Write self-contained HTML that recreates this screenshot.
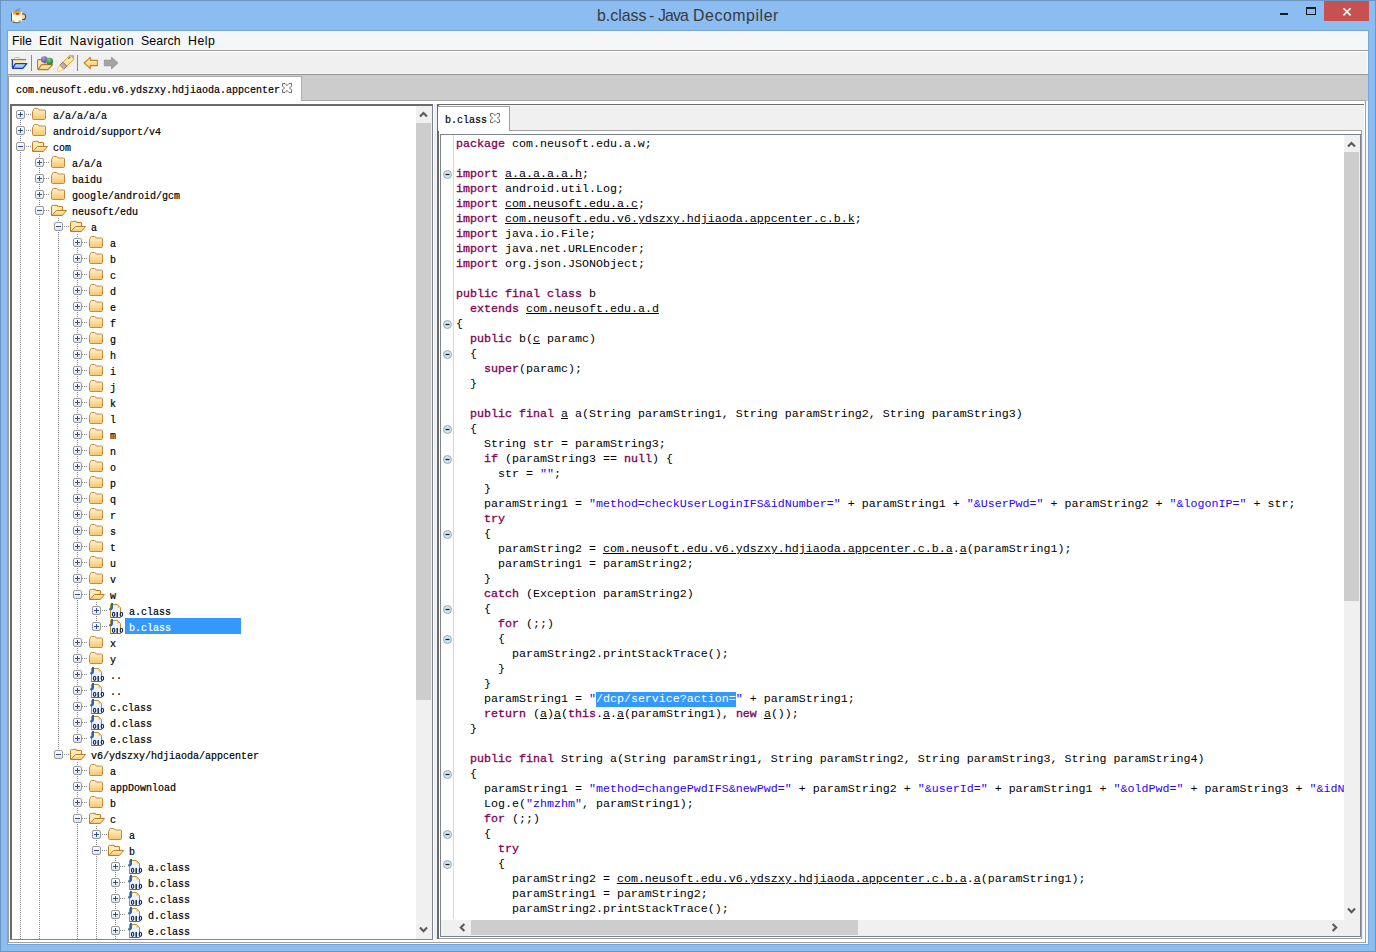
<!DOCTYPE html><html><head><meta charset="utf-8"><style>
*{margin:0;padding:0;box-sizing:border-box}
html,body{width:1376px;height:952px;overflow:hidden}
body{position:relative;background:#8bbdf2;font-family:"Liberation Sans",sans-serif}
.a{position:absolute}
.title{position:absolute;left:597px;top:6px;font-size:15.9px;color:#3a3a3a;white-space:nowrap;line-height:20px}
.menu{position:absolute;top:33px;font-size:12.3px;color:#000;line-height:16px;white-space:nowrap}
.tt{position:absolute;font-family:"Liberation Mono",monospace;font-size:10px;letter-spacing:0px;line-height:16px;white-space:pre;color:#000;-webkit-text-stroke:0.2px #000}
.tt.w{color:#fff;-webkit-text-stroke:0.2px #fff}
.code{position:absolute;left:456px;font-family:"Liberation Mono",monospace;font-size:11.667px;line-height:15px;white-space:pre;color:#000}
.k{color:#7f0055;-webkit-text-stroke:0.3px #7f0055}
.s{color:#2a00ff}
.u{text-decoration:underline}
.sel{color:#fff}
</style></head><body>
<div class="a" style="left:0;top:0;width:1376px;height:952px;border:1px solid #6b96c2"></div>
<div class="a" style="left:7px;top:30px;width:1362px;height:915px;border:1px solid #74a4d8"></div>
<svg class="a" style="left:8px;top:4px" width="22" height="22" viewBox="8 4 22 22">
<path d="M15.5 12 L17 10 L18.5 10.5 L19.8 8.3" fill="none" stroke="#8a8f96" stroke-width="1.6" stroke-linejoin="round"/>
<ellipse cx="16.5" cy="22.3" rx="4" ry="0.9" fill="#4a6080" opacity="0.7"/>
<path d="M21.5 14 H23.5 Q25.5 14 25.5 16 V17.5 Q25.5 19.5 23.5 19.5 H21.5" fill="#f7d9a0" stroke="#7a4010" stroke-width="1.1"/>
<rect x="11" y="12" width="11" height="10" fill="#fffce6"/>
<rect x="11" y="12.5" width="1" height="9" fill="#8a4a14"/>
<path d="M12.5 12 H21 L20 14.5 H13.5Z" fill="#f5a020"/>
<rect x="16" y="13" width="3" height="1.6" fill="#e02010"/>
<rect x="12" y="20.5" width="2.5" height="1.5" fill="#f0a030"/><rect x="18.5" y="20.5" width="3" height="1.5" fill="#f0a030"/>
</svg>
<div class="title" style="left:597px">b.class</div>
<div class="title" style="left:649px">-</div>
<div class="title" style="left:658px;letter-spacing:-0.9px">Java</div>
<div class="title" style="left:693px;letter-spacing:0.55px">Decompiler</div>
<div class="a" style="left:1280px;top:13px;width:8px;height:2px;background:#1a1a1a"></div>
<div class="a" style="left:1306px;top:7px;width:10px;height:8px;border:1px solid #1a1a1a;border-top-width:2px"></div>
<div class="a" style="left:1324px;top:1px;width:45px;height:20px;background:#c75050"></div>
<svg class="a" style="left:1342px;top:7px" width="10" height="10" viewBox="0 0 10 10"><path d="M1.4 1.2 L8.6 8.4 M8.6 1.2 L1.4 8.4" stroke="#fff" stroke-width="1.6"/></svg>
<div class="a" style="left:8px;top:31px;width:1360px;height:913px;background:#f0f0f0"></div>
<div class="a" style="left:1366px;top:52px;width:2px;height:892px;background:#faf8f5"></div>
<div class="a" style="left:8px;top:943px;width:1360px;height:1px;background:#faf8f5"></div>
<div class="a" style="left:8px;top:31px;width:1360px;height:19px;background:#f5f6f7"></div>
<div class="a" style="left:8px;top:50px;width:1360px;height:1px;background:#a0a0a0"></div>
<div class="a" style="left:8px;top:51px;width:1360px;height:1px;background:#fff"></div>
<div class="menu" style="left:12px;letter-spacing:0px">File</div>
<div class="menu" style="left:39px;letter-spacing:0.5px">Edit</div>
<div class="menu" style="left:70px;letter-spacing:0.6px">Navigation</div>
<div class="menu" style="left:141px;letter-spacing:0.15px">Search</div>
<div class="menu" style="left:188px;letter-spacing:0.5px">Help</div>
<div class="a" style="left:8px;top:73px;width:1360px;height:1px;background:#f6f6f6"></div>
<div class="a" style="left:8px;top:74px;width:1360px;height:1px;background:#969696"></div>
<div class="a" style="left:8px;top:75px;width:1360px;height:26px;background:#cccccc"></div>
<div class="a" style="left:8px;top:100px;width:1358px;height:1px;background:#a8a8a8"></div>
<div class="a" style="left:8px;top:76px;width:294px;height:25px;background:#fff;border-left:1px solid #a0a0a0;border-top:1px solid #adadad;border-right:1px solid #adadad"></div>
<div class="tt" style="left:16px;top:83px">com.neusoft.edu.v6.ydszxy.hdjiaoda.appcenter</div>
<svg class="a" style="left:282px;top:83px" width="11" height="11" viewBox="0 0 11 11"><path d="M0.5 0.5 H3 L5 2.5 L7 0.5 H9.5 V3 L7.5 5 L9.5 7 V9.5 H7 L5 7.5 L3 9.5 H0.5 V7 L2.5 5 L0.5 3 Z" fill="#fff" stroke="#6b6b6b" stroke-width="1"/></svg>
<div class="a" style="left:8px;top:101px;width:1358px;height:842px;background:#fff;border-left:1px solid #a0a0a0;border-right:1px solid #a0a0a0;border-bottom:1px solid #a0a0a0"></div>
<div class="a" style="left:434px;top:104px;width:3px;height:836px;background:#f0f0f0"></div>
<div class="a" style="left:10px;top:104px;width:423px;height:836px;border-top:2px solid #6a6a6a;border-left:2px solid #6a6a6a;border-right:1px solid #7a8494;border-bottom:1px solid #7a8494;background:#fff;overflow:hidden">
</div>
<div class="a" style="left:416px;top:106px;width:16px;height:833px;background:#f0f0f0"></div>
<div class="a" style="left:416px;top:123px;width:15px;height:577px;background:#cdcdcd"></div>
<svg class="a" style="left:419px;top:110px" width="9" height="9" viewBox="0 0 9 9"><path d="M1 6.6 L4.5 3 L8 6.6" fill="none" stroke="#5a5a5a" stroke-width="2.1"/></svg>
<svg class="a" style="left:419px;top:925px" width="9" height="9" viewBox="0 0 9 9"><path d="M1 2.6 L4.5 6.2 L8 2.6" fill="none" stroke="#5a5a5a" stroke-width="2.1"/></svg>
<svg width="0" height="0" style="position:absolute">
<defs>
<linearGradient id="fg" x1="0" y1="0" x2="0" y2="1"><stop offset="0" stop-color="#fff3d0"/><stop offset="1" stop-color="#f6c768"/></linearGradient>
<linearGradient id="bg" x1="0" y1="0" x2="0" y2="1"><stop offset="0" stop-color="#ffffff"/><stop offset="1" stop-color="#e4e4e4"/></linearGradient>
<symbol id="fold" viewBox="0 0 15 12"><path d="M1.5 2.5 V1.5 Q1.5 0.5 2.5 0.5 H5.5 Q6.5 0.5 7 2 H12.5 Q13.5 2 13.5 3 V10.5 Q13.5 11.5 12.5 11.5 H1.5 Q0.5 11.5 0.5 10.5 V3.5 Q0.5 2.5 1.5 2.5Z" fill="url(#fg)" stroke="#c8893a"/></symbol>
<symbol id="open" viewBox="0 0 16 12"><path d="M0.5 11.5 V2.5 Q0.5 1.5 1.5 1.5 H2.5 V1.6 Q2.5 1.3 3 1.3 H6 Q6.5 1.3 6.5 1.8 V2.5 H11 Q11.5 2.5 11.5 3 V6.5" fill="#fdebb8" stroke="#c07a20"/><path d="M5.5 6.5 H15.5 L11.3 11.5 H0.8 Z" fill="url(#fg)" stroke="#c07a20" stroke-linejoin="round"/></symbol>
<symbol id="cls" viewBox="0 0 15 15"><path d="M1.5 14.5 V1.5 H8.5 L11.5 4.5 V14.5 Z" fill="#eef3fb" stroke="#b8902a"/><path d="M8.5 1.5 V4.5 H11.5Z" fill="#e0b860"/><path d="M1.5 14.5 H11.5" stroke="#7a6a30"/><path d="M3 0 V4.8 Q3 6.6 0.2 6.3" fill="none" stroke="#2a66a8" stroke-width="2"/><ellipse cx="4.6" cy="11.3" rx="1.2" ry="2.1" fill="none" stroke="#0a2060" stroke-width="1.15"/><path d="M8.2 9 V14" stroke="#0a2060" stroke-width="1.4"/><ellipse cx="12.4" cy="11.3" rx="1.2" ry="2.1" fill="none" stroke="#0a2060" stroke-width="1.15"/></symbol>
<symbol id="plus" viewBox="0 0 9 9"><rect x="0.5" y="0.5" width="8" height="8" rx="1.5" fill="url(#bg)" stroke="#999"/><path d="M2 4.5 H7 M4.5 2 V7" stroke="#2d4f9a" stroke-width="1"/></symbol>
<symbol id="minus" viewBox="0 0 9 9"><rect x="0.5" y="0.5" width="8" height="8" rx="1.5" fill="url(#bg)" stroke="#999"/><path d="M2 4.5 H7" stroke="#2d4f9a" stroke-width="1"/></symbol>
<symbol id="gfold" viewBox="0 0 9 9"><circle cx="4.5" cy="4.5" r="4" fill="#cfe6f5" stroke="#9aa9b5"/><path d="M2.5 4.5 H6.5" stroke="#1a1a1a" stroke-width="1.2"/></symbol>
</defs></svg>
<div class="a" style="left:12px;top:106px;width:404px;height:833px;overflow:hidden">
<div class="a" style="left:-12px;top:-106px;width:1376px;height:952px">
<div class="a" style="left:20px;top:114px;width:1px;height:825px;background:repeating-linear-gradient(to bottom,#8a8a8a 0 1px,transparent 1px 2px)"></div><div class="a" style="left:39px;top:154px;width:1px;height:785px;background:repeating-linear-gradient(to bottom,#8a8a8a 0 1px,transparent 1px 2px)"></div><div class="a" style="left:58px;top:218px;width:1px;height:536px;background:repeating-linear-gradient(to bottom,#8a8a8a 0 1px,transparent 1px 2px)"></div><div class="a" style="left:77px;top:234px;width:1px;height:504px;background:repeating-linear-gradient(to bottom,#8a8a8a 0 1px,transparent 1px 2px)"></div><div class="a" style="left:96px;top:602px;width:1px;height:24px;background:repeating-linear-gradient(to bottom,#8a8a8a 0 1px,transparent 1px 2px)"></div><div class="a" style="left:77px;top:762px;width:1px;height:177px;background:repeating-linear-gradient(to bottom,#8a8a8a 0 1px,transparent 1px 2px)"></div><div class="a" style="left:96px;top:826px;width:1px;height:113px;background:repeating-linear-gradient(to bottom,#8a8a8a 0 1px,transparent 1px 2px)"></div><div class="a" style="left:115px;top:858px;width:1px;height:81px;background:repeating-linear-gradient(to bottom,#8a8a8a 0 1px,transparent 1px 2px)"></div><div class="a" style="left:26px;top:114px;width:5px;height:1px;background:repeating-linear-gradient(to right,#8a8a8a 0 1px,transparent 1px 2px)"></div><svg class="a" style="left:16px;top:110px" width="9" height="9"><use href="#plus"/></svg><svg class="a" style="left:32px;top:108px" width="15" height="12"><use href="#fold"/></svg><div class="tt" style="left:53px;top:109px">a/a/a/a/a</div><div class="a" style="left:26px;top:130px;width:5px;height:1px;background:repeating-linear-gradient(to right,#8a8a8a 0 1px,transparent 1px 2px)"></div><svg class="a" style="left:16px;top:126px" width="9" height="9"><use href="#plus"/></svg><svg class="a" style="left:32px;top:124px" width="15" height="12"><use href="#fold"/></svg><div class="tt" style="left:53px;top:125px">android/support/v4</div><div class="a" style="left:26px;top:146px;width:5px;height:1px;background:repeating-linear-gradient(to right,#8a8a8a 0 1px,transparent 1px 2px)"></div><svg class="a" style="left:16px;top:142px" width="9" height="9"><use href="#minus"/></svg><svg class="a" style="left:32px;top:140px" width="16" height="12"><use href="#open"/></svg><div class="tt" style="left:53px;top:141px">com</div><div class="a" style="left:44px;top:162px;width:6px;height:1px;background:repeating-linear-gradient(to right,#8a8a8a 0 1px,transparent 1px 2px)"></div><svg class="a" style="left:35px;top:158px" width="9" height="9"><use href="#plus"/></svg><svg class="a" style="left:51px;top:156px" width="15" height="12"><use href="#fold"/></svg><div class="tt" style="left:72px;top:157px">a/a/a</div><div class="a" style="left:44px;top:178px;width:6px;height:1px;background:repeating-linear-gradient(to right,#8a8a8a 0 1px,transparent 1px 2px)"></div><svg class="a" style="left:35px;top:174px" width="9" height="9"><use href="#plus"/></svg><svg class="a" style="left:51px;top:172px" width="15" height="12"><use href="#fold"/></svg><div class="tt" style="left:72px;top:173px">baidu</div><div class="a" style="left:44px;top:194px;width:6px;height:1px;background:repeating-linear-gradient(to right,#8a8a8a 0 1px,transparent 1px 2px)"></div><svg class="a" style="left:35px;top:190px" width="9" height="9"><use href="#plus"/></svg><svg class="a" style="left:51px;top:188px" width="15" height="12"><use href="#fold"/></svg><div class="tt" style="left:72px;top:189px">google/android/gcm</div><div class="a" style="left:44px;top:210px;width:6px;height:1px;background:repeating-linear-gradient(to right,#8a8a8a 0 1px,transparent 1px 2px)"></div><svg class="a" style="left:35px;top:206px" width="9" height="9"><use href="#minus"/></svg><svg class="a" style="left:51px;top:204px" width="16" height="12"><use href="#open"/></svg><div class="tt" style="left:72px;top:205px">neusoft/edu</div><div class="a" style="left:64px;top:226px;width:5px;height:1px;background:repeating-linear-gradient(to right,#8a8a8a 0 1px,transparent 1px 2px)"></div><svg class="a" style="left:54px;top:222px" width="9" height="9"><use href="#minus"/></svg><svg class="a" style="left:70px;top:220px" width="16" height="12"><use href="#open"/></svg><div class="tt" style="left:91px;top:221px">a</div><div class="a" style="left:82px;top:242px;width:6px;height:1px;background:repeating-linear-gradient(to right,#8a8a8a 0 1px,transparent 1px 2px)"></div><svg class="a" style="left:73px;top:238px" width="9" height="9"><use href="#plus"/></svg><svg class="a" style="left:89px;top:236px" width="15" height="12"><use href="#fold"/></svg><div class="tt" style="left:110px;top:237px">a</div><div class="a" style="left:82px;top:258px;width:6px;height:1px;background:repeating-linear-gradient(to right,#8a8a8a 0 1px,transparent 1px 2px)"></div><svg class="a" style="left:73px;top:254px" width="9" height="9"><use href="#plus"/></svg><svg class="a" style="left:89px;top:252px" width="15" height="12"><use href="#fold"/></svg><div class="tt" style="left:110px;top:253px">b</div><div class="a" style="left:82px;top:274px;width:6px;height:1px;background:repeating-linear-gradient(to right,#8a8a8a 0 1px,transparent 1px 2px)"></div><svg class="a" style="left:73px;top:270px" width="9" height="9"><use href="#plus"/></svg><svg class="a" style="left:89px;top:268px" width="15" height="12"><use href="#fold"/></svg><div class="tt" style="left:110px;top:269px">c</div><div class="a" style="left:82px;top:290px;width:6px;height:1px;background:repeating-linear-gradient(to right,#8a8a8a 0 1px,transparent 1px 2px)"></div><svg class="a" style="left:73px;top:286px" width="9" height="9"><use href="#plus"/></svg><svg class="a" style="left:89px;top:284px" width="15" height="12"><use href="#fold"/></svg><div class="tt" style="left:110px;top:285px">d</div><div class="a" style="left:82px;top:306px;width:6px;height:1px;background:repeating-linear-gradient(to right,#8a8a8a 0 1px,transparent 1px 2px)"></div><svg class="a" style="left:73px;top:302px" width="9" height="9"><use href="#plus"/></svg><svg class="a" style="left:89px;top:300px" width="15" height="12"><use href="#fold"/></svg><div class="tt" style="left:110px;top:301px">e</div><div class="a" style="left:82px;top:322px;width:6px;height:1px;background:repeating-linear-gradient(to right,#8a8a8a 0 1px,transparent 1px 2px)"></div><svg class="a" style="left:73px;top:318px" width="9" height="9"><use href="#plus"/></svg><svg class="a" style="left:89px;top:316px" width="15" height="12"><use href="#fold"/></svg><div class="tt" style="left:110px;top:317px">f</div><div class="a" style="left:82px;top:338px;width:6px;height:1px;background:repeating-linear-gradient(to right,#8a8a8a 0 1px,transparent 1px 2px)"></div><svg class="a" style="left:73px;top:334px" width="9" height="9"><use href="#plus"/></svg><svg class="a" style="left:89px;top:332px" width="15" height="12"><use href="#fold"/></svg><div class="tt" style="left:110px;top:333px">g</div><div class="a" style="left:82px;top:354px;width:6px;height:1px;background:repeating-linear-gradient(to right,#8a8a8a 0 1px,transparent 1px 2px)"></div><svg class="a" style="left:73px;top:350px" width="9" height="9"><use href="#plus"/></svg><svg class="a" style="left:89px;top:348px" width="15" height="12"><use href="#fold"/></svg><div class="tt" style="left:110px;top:349px">h</div><div class="a" style="left:82px;top:370px;width:6px;height:1px;background:repeating-linear-gradient(to right,#8a8a8a 0 1px,transparent 1px 2px)"></div><svg class="a" style="left:73px;top:366px" width="9" height="9"><use href="#plus"/></svg><svg class="a" style="left:89px;top:364px" width="15" height="12"><use href="#fold"/></svg><div class="tt" style="left:110px;top:365px">i</div><div class="a" style="left:82px;top:386px;width:6px;height:1px;background:repeating-linear-gradient(to right,#8a8a8a 0 1px,transparent 1px 2px)"></div><svg class="a" style="left:73px;top:382px" width="9" height="9"><use href="#plus"/></svg><svg class="a" style="left:89px;top:380px" width="15" height="12"><use href="#fold"/></svg><div class="tt" style="left:110px;top:381px">j</div><div class="a" style="left:82px;top:402px;width:6px;height:1px;background:repeating-linear-gradient(to right,#8a8a8a 0 1px,transparent 1px 2px)"></div><svg class="a" style="left:73px;top:398px" width="9" height="9"><use href="#plus"/></svg><svg class="a" style="left:89px;top:396px" width="15" height="12"><use href="#fold"/></svg><div class="tt" style="left:110px;top:397px">k</div><div class="a" style="left:82px;top:418px;width:6px;height:1px;background:repeating-linear-gradient(to right,#8a8a8a 0 1px,transparent 1px 2px)"></div><svg class="a" style="left:73px;top:414px" width="9" height="9"><use href="#plus"/></svg><svg class="a" style="left:89px;top:412px" width="15" height="12"><use href="#fold"/></svg><div class="tt" style="left:110px;top:413px">l</div><div class="a" style="left:82px;top:434px;width:6px;height:1px;background:repeating-linear-gradient(to right,#8a8a8a 0 1px,transparent 1px 2px)"></div><svg class="a" style="left:73px;top:430px" width="9" height="9"><use href="#plus"/></svg><svg class="a" style="left:89px;top:428px" width="15" height="12"><use href="#fold"/></svg><div class="tt" style="left:110px;top:429px">m</div><div class="a" style="left:82px;top:450px;width:6px;height:1px;background:repeating-linear-gradient(to right,#8a8a8a 0 1px,transparent 1px 2px)"></div><svg class="a" style="left:73px;top:446px" width="9" height="9"><use href="#plus"/></svg><svg class="a" style="left:89px;top:444px" width="15" height="12"><use href="#fold"/></svg><div class="tt" style="left:110px;top:445px">n</div><div class="a" style="left:82px;top:466px;width:6px;height:1px;background:repeating-linear-gradient(to right,#8a8a8a 0 1px,transparent 1px 2px)"></div><svg class="a" style="left:73px;top:462px" width="9" height="9"><use href="#plus"/></svg><svg class="a" style="left:89px;top:460px" width="15" height="12"><use href="#fold"/></svg><div class="tt" style="left:110px;top:461px">o</div><div class="a" style="left:82px;top:482px;width:6px;height:1px;background:repeating-linear-gradient(to right,#8a8a8a 0 1px,transparent 1px 2px)"></div><svg class="a" style="left:73px;top:478px" width="9" height="9"><use href="#plus"/></svg><svg class="a" style="left:89px;top:476px" width="15" height="12"><use href="#fold"/></svg><div class="tt" style="left:110px;top:477px">p</div><div class="a" style="left:82px;top:498px;width:6px;height:1px;background:repeating-linear-gradient(to right,#8a8a8a 0 1px,transparent 1px 2px)"></div><svg class="a" style="left:73px;top:494px" width="9" height="9"><use href="#plus"/></svg><svg class="a" style="left:89px;top:492px" width="15" height="12"><use href="#fold"/></svg><div class="tt" style="left:110px;top:493px">q</div><div class="a" style="left:82px;top:514px;width:6px;height:1px;background:repeating-linear-gradient(to right,#8a8a8a 0 1px,transparent 1px 2px)"></div><svg class="a" style="left:73px;top:510px" width="9" height="9"><use href="#plus"/></svg><svg class="a" style="left:89px;top:508px" width="15" height="12"><use href="#fold"/></svg><div class="tt" style="left:110px;top:509px">r</div><div class="a" style="left:82px;top:530px;width:6px;height:1px;background:repeating-linear-gradient(to right,#8a8a8a 0 1px,transparent 1px 2px)"></div><svg class="a" style="left:73px;top:526px" width="9" height="9"><use href="#plus"/></svg><svg class="a" style="left:89px;top:524px" width="15" height="12"><use href="#fold"/></svg><div class="tt" style="left:110px;top:525px">s</div><div class="a" style="left:82px;top:546px;width:6px;height:1px;background:repeating-linear-gradient(to right,#8a8a8a 0 1px,transparent 1px 2px)"></div><svg class="a" style="left:73px;top:542px" width="9" height="9"><use href="#plus"/></svg><svg class="a" style="left:89px;top:540px" width="15" height="12"><use href="#fold"/></svg><div class="tt" style="left:110px;top:541px">t</div><div class="a" style="left:82px;top:562px;width:6px;height:1px;background:repeating-linear-gradient(to right,#8a8a8a 0 1px,transparent 1px 2px)"></div><svg class="a" style="left:73px;top:558px" width="9" height="9"><use href="#plus"/></svg><svg class="a" style="left:89px;top:556px" width="15" height="12"><use href="#fold"/></svg><div class="tt" style="left:110px;top:557px">u</div><div class="a" style="left:82px;top:578px;width:6px;height:1px;background:repeating-linear-gradient(to right,#8a8a8a 0 1px,transparent 1px 2px)"></div><svg class="a" style="left:73px;top:574px" width="9" height="9"><use href="#plus"/></svg><svg class="a" style="left:89px;top:572px" width="15" height="12"><use href="#fold"/></svg><div class="tt" style="left:110px;top:573px">v</div><div class="a" style="left:82px;top:594px;width:6px;height:1px;background:repeating-linear-gradient(to right,#8a8a8a 0 1px,transparent 1px 2px)"></div><svg class="a" style="left:73px;top:590px" width="9" height="9"><use href="#minus"/></svg><svg class="a" style="left:89px;top:588px" width="16" height="12"><use href="#open"/></svg><div class="tt" style="left:110px;top:589px">w</div><div class="a" style="left:102px;top:610px;width:5px;height:1px;background:repeating-linear-gradient(to right,#8a8a8a 0 1px,transparent 1px 2px)"></div><svg class="a" style="left:92px;top:606px" width="9" height="9"><use href="#plus"/></svg><svg class="a" style="left:109px;top:603px" width="15" height="15"><use href="#cls"/></svg><div class="tt" style="left:129px;top:605px">a.class</div><div class="a" style="left:102px;top:626px;width:5px;height:1px;background:repeating-linear-gradient(to right,#8a8a8a 0 1px,transparent 1px 2px)"></div><svg class="a" style="left:92px;top:622px" width="9" height="9"><use href="#plus"/></svg><svg class="a" style="left:109px;top:619px" width="15" height="15"><use href="#cls"/></svg><div class="a" style="left:125px;top:618px;width:116px;height:16px;background:#3399ff"></div><div class="tt w" style="left:129px;top:621px">b.class</div><div class="a" style="left:82px;top:642px;width:6px;height:1px;background:repeating-linear-gradient(to right,#8a8a8a 0 1px,transparent 1px 2px)"></div><svg class="a" style="left:73px;top:638px" width="9" height="9"><use href="#plus"/></svg><svg class="a" style="left:89px;top:636px" width="15" height="12"><use href="#fold"/></svg><div class="tt" style="left:110px;top:637px">x</div><div class="a" style="left:82px;top:658px;width:6px;height:1px;background:repeating-linear-gradient(to right,#8a8a8a 0 1px,transparent 1px 2px)"></div><svg class="a" style="left:73px;top:654px" width="9" height="9"><use href="#plus"/></svg><svg class="a" style="left:89px;top:652px" width="15" height="12"><use href="#fold"/></svg><div class="tt" style="left:110px;top:653px">y</div><div class="a" style="left:82px;top:674px;width:6px;height:1px;background:repeating-linear-gradient(to right,#8a8a8a 0 1px,transparent 1px 2px)"></div><svg class="a" style="left:73px;top:670px" width="9" height="9"><use href="#plus"/></svg><svg class="a" style="left:90px;top:667px" width="15" height="15"><use href="#cls"/></svg><div class="tt" style="left:110px;top:669px">..</div><div class="a" style="left:82px;top:690px;width:6px;height:1px;background:repeating-linear-gradient(to right,#8a8a8a 0 1px,transparent 1px 2px)"></div><svg class="a" style="left:73px;top:686px" width="9" height="9"><use href="#plus"/></svg><svg class="a" style="left:90px;top:683px" width="15" height="15"><use href="#cls"/></svg><div class="tt" style="left:110px;top:685px">..</div><div class="a" style="left:82px;top:706px;width:6px;height:1px;background:repeating-linear-gradient(to right,#8a8a8a 0 1px,transparent 1px 2px)"></div><svg class="a" style="left:73px;top:702px" width="9" height="9"><use href="#plus"/></svg><svg class="a" style="left:90px;top:699px" width="15" height="15"><use href="#cls"/></svg><div class="tt" style="left:110px;top:701px">c.class</div><div class="a" style="left:82px;top:722px;width:6px;height:1px;background:repeating-linear-gradient(to right,#8a8a8a 0 1px,transparent 1px 2px)"></div><svg class="a" style="left:73px;top:718px" width="9" height="9"><use href="#plus"/></svg><svg class="a" style="left:90px;top:715px" width="15" height="15"><use href="#cls"/></svg><div class="tt" style="left:110px;top:717px">d.class</div><div class="a" style="left:82px;top:738px;width:6px;height:1px;background:repeating-linear-gradient(to right,#8a8a8a 0 1px,transparent 1px 2px)"></div><svg class="a" style="left:73px;top:734px" width="9" height="9"><use href="#plus"/></svg><svg class="a" style="left:90px;top:731px" width="15" height="15"><use href="#cls"/></svg><div class="tt" style="left:110px;top:733px">e.class</div><div class="a" style="left:64px;top:754px;width:5px;height:1px;background:repeating-linear-gradient(to right,#8a8a8a 0 1px,transparent 1px 2px)"></div><svg class="a" style="left:54px;top:750px" width="9" height="9"><use href="#minus"/></svg><svg class="a" style="left:70px;top:748px" width="16" height="12"><use href="#open"/></svg><div class="tt" style="left:91px;top:749px">v6/ydszxy/hdjiaoda/appcenter</div><div class="a" style="left:82px;top:770px;width:6px;height:1px;background:repeating-linear-gradient(to right,#8a8a8a 0 1px,transparent 1px 2px)"></div><svg class="a" style="left:73px;top:766px" width="9" height="9"><use href="#plus"/></svg><svg class="a" style="left:89px;top:764px" width="15" height="12"><use href="#fold"/></svg><div class="tt" style="left:110px;top:765px">a</div><div class="a" style="left:82px;top:786px;width:6px;height:1px;background:repeating-linear-gradient(to right,#8a8a8a 0 1px,transparent 1px 2px)"></div><svg class="a" style="left:73px;top:782px" width="9" height="9"><use href="#plus"/></svg><svg class="a" style="left:89px;top:780px" width="15" height="12"><use href="#fold"/></svg><div class="tt" style="left:110px;top:781px">appDownload</div><div class="a" style="left:82px;top:802px;width:6px;height:1px;background:repeating-linear-gradient(to right,#8a8a8a 0 1px,transparent 1px 2px)"></div><svg class="a" style="left:73px;top:798px" width="9" height="9"><use href="#plus"/></svg><svg class="a" style="left:89px;top:796px" width="15" height="12"><use href="#fold"/></svg><div class="tt" style="left:110px;top:797px">b</div><div class="a" style="left:82px;top:818px;width:6px;height:1px;background:repeating-linear-gradient(to right,#8a8a8a 0 1px,transparent 1px 2px)"></div><svg class="a" style="left:73px;top:814px" width="9" height="9"><use href="#minus"/></svg><svg class="a" style="left:89px;top:812px" width="16" height="12"><use href="#open"/></svg><div class="tt" style="left:110px;top:813px">c</div><div class="a" style="left:102px;top:834px;width:5px;height:1px;background:repeating-linear-gradient(to right,#8a8a8a 0 1px,transparent 1px 2px)"></div><svg class="a" style="left:92px;top:830px" width="9" height="9"><use href="#plus"/></svg><svg class="a" style="left:108px;top:828px" width="15" height="12"><use href="#fold"/></svg><div class="tt" style="left:129px;top:829px">a</div><div class="a" style="left:102px;top:850px;width:5px;height:1px;background:repeating-linear-gradient(to right,#8a8a8a 0 1px,transparent 1px 2px)"></div><svg class="a" style="left:92px;top:846px" width="9" height="9"><use href="#minus"/></svg><svg class="a" style="left:108px;top:844px" width="16" height="12"><use href="#open"/></svg><div class="tt" style="left:129px;top:845px">b</div><div class="a" style="left:120px;top:866px;width:6px;height:1px;background:repeating-linear-gradient(to right,#8a8a8a 0 1px,transparent 1px 2px)"></div><svg class="a" style="left:111px;top:862px" width="9" height="9"><use href="#plus"/></svg><svg class="a" style="left:128px;top:859px" width="15" height="15"><use href="#cls"/></svg><div class="tt" style="left:148px;top:861px">a.class</div><div class="a" style="left:120px;top:882px;width:6px;height:1px;background:repeating-linear-gradient(to right,#8a8a8a 0 1px,transparent 1px 2px)"></div><svg class="a" style="left:111px;top:878px" width="9" height="9"><use href="#plus"/></svg><svg class="a" style="left:128px;top:875px" width="15" height="15"><use href="#cls"/></svg><div class="tt" style="left:148px;top:877px">b.class</div><div class="a" style="left:120px;top:898px;width:6px;height:1px;background:repeating-linear-gradient(to right,#8a8a8a 0 1px,transparent 1px 2px)"></div><svg class="a" style="left:111px;top:894px" width="9" height="9"><use href="#plus"/></svg><svg class="a" style="left:128px;top:891px" width="15" height="15"><use href="#cls"/></svg><div class="tt" style="left:148px;top:893px">c.class</div><div class="a" style="left:120px;top:914px;width:6px;height:1px;background:repeating-linear-gradient(to right,#8a8a8a 0 1px,transparent 1px 2px)"></div><svg class="a" style="left:111px;top:910px" width="9" height="9"><use href="#plus"/></svg><svg class="a" style="left:128px;top:907px" width="15" height="15"><use href="#cls"/></svg><div class="tt" style="left:148px;top:909px">d.class</div><div class="a" style="left:120px;top:930px;width:6px;height:1px;background:repeating-linear-gradient(to right,#8a8a8a 0 1px,transparent 1px 2px)"></div><svg class="a" style="left:111px;top:926px" width="9" height="9"><use href="#plus"/></svg><svg class="a" style="left:128px;top:923px" width="15" height="15"><use href="#cls"/></svg><div class="tt" style="left:148px;top:925px">e.class</div>
</div></div>
<div class="a" style="left:437px;top:104px;width:927px;height:835px;border-top:1px solid #6a6a6a;border-left:2px solid #6a6a6a;background:#f0f0f0"></div>
<div class="a" style="left:439px;top:105px;width:925px;height:1px;background:#f8f8f8"></div>
<div class="a" style="left:438px;top:106px;width:72px;height:25px;background:#fff;border-top:1px solid #a0a0a0;border-right:1px solid #a0a0a0"></div>
<div class="tt" style="left:445px;top:113px">b.class</div>
<svg class="a" style="left:490px;top:113px" width="11" height="11" viewBox="0 0 11 11"><path d="M0.5 0.5 H3 L5 2.5 L7 0.5 H9.5 V3 L7.5 5 L9.5 7 V9.5 H7 L5 7.5 L3 9.5 H0.5 V7 L2.5 5 L0.5 3 Z" fill="#fff" stroke="#6b6b6b" stroke-width="1"/></svg>
<div class="a" style="left:510px;top:130px;width:852px;height:1px;background:#a0a0a0"></div>
<div class="a" style="left:439px;top:131px;width:923px;height:808px;background:#fff;border-right:1px solid #a0a0a0;border-bottom:1px solid #a0a0a0"></div>
<div class="a" style="left:440px;top:134px;width:921px;height:803px;border:1px solid #7a8391;background:#fff"></div>
<div class="a" style="left:453px;top:135px;width:1px;height:784px;background:#d8d8d8"></div>
<div class="a" style="left:454px;top:135px;width:890px;height:784px;overflow:hidden">
<div class="a" style="left:-454px;top:-135px;width:1376px;height:952px">
<div class="a" style="left:596px;top:692px;width:140px;height:15px;background:#3399ff"></div>
<div class="code" style="top:137px"><span class="k">package</span> com.neusoft.edu.a.w;</div>
<div class="code" style="top:152px"></div>
<div class="code" style="top:167px"><span class="k">import</span> <span class="u">a.a.a.a.a.h</span>;</div>
<div class="code" style="top:182px"><span class="k">import</span> android.util.Log;</div>
<div class="code" style="top:197px"><span class="k">import</span> <span class="u">com.neusoft.edu.a.c</span>;</div>
<div class="code" style="top:212px"><span class="k">import</span> <span class="u">com.neusoft.edu.v6.ydszxy.hdjiaoda.appcenter.c.b.k</span>;</div>
<div class="code" style="top:227px"><span class="k">import</span> java.io.File;</div>
<div class="code" style="top:242px"><span class="k">import</span> java.net.URLEncoder;</div>
<div class="code" style="top:257px"><span class="k">import</span> org.json.JSONObject;</div>
<div class="code" style="top:272px"></div>
<div class="code" style="top:287px"><span class="k">public</span> <span class="k">final</span> <span class="k">class</span> b</div>
<div class="code" style="top:302px">  <span class="k">extends</span> <span class="u">com.neusoft.edu.a.d</span></div>
<div class="code" style="top:317px">{</div>
<div class="code" style="top:332px">  <span class="k">public</span> b(<span class="u">c</span> paramc)</div>
<div class="code" style="top:347px">  {</div>
<div class="code" style="top:362px">    <span class="k">super</span>(paramc);</div>
<div class="code" style="top:377px">  }</div>
<div class="code" style="top:392px"></div>
<div class="code" style="top:407px">  <span class="k">public</span> <span class="k">final</span> <span class="u">a</span> a(String paramString1, String paramString2, String paramString3)</div>
<div class="code" style="top:422px">  {</div>
<div class="code" style="top:437px">    String str = paramString3;</div>
<div class="code" style="top:452px">    <span class="k">if</span> (paramString3 == <span class="k">null</span>) {</div>
<div class="code" style="top:467px">      str = <span class="s">&quot;&quot;</span>;</div>
<div class="code" style="top:482px">    }</div>
<div class="code" style="top:497px">    paramString1 = <span class="s">&quot;method=checkUserLoginIFS&amp;idNumber=&quot;</span> + paramString1 + <span class="s">&quot;&amp;UserPwd=&quot;</span> + paramString2 + <span class="s">&quot;&amp;logonIP=&quot;</span> + str;</div>
<div class="code" style="top:512px">    <span class="k">try</span></div>
<div class="code" style="top:527px">    {</div>
<div class="code" style="top:542px">      paramString2 = <span class="u">com.neusoft.edu.v6.ydszxy.hdjiaoda.appcenter.c.b.a</span>.<span class="u">a</span>(paramString1);</div>
<div class="code" style="top:557px">      paramString1 = paramString2;</div>
<div class="code" style="top:572px">    }</div>
<div class="code" style="top:587px">    <span class="k">catch</span> (Exception paramString2)</div>
<div class="code" style="top:602px">    {</div>
<div class="code" style="top:617px">      <span class="k">for</span> (;;)</div>
<div class="code" style="top:632px">      {</div>
<div class="code" style="top:647px">        paramString2.printStackTrace();</div>
<div class="code" style="top:662px">      }</div>
<div class="code" style="top:677px">    }</div>
<div class="code" style="top:692px">    paramString1 = <span class="s">&quot;</span><span class="sel">/dcp/service?action=</span><span class="s">&quot;</span> + paramString1;</div>
<div class="code" style="top:707px">    <span class="k">return</span> (<span class="u">a</span>)<span class="u">a</span>(<span class="k">this</span>.<span class="u">a</span>.<span class="u">a</span>(paramString1), <span class="k">new</span> <span class="u">a</span>());</div>
<div class="code" style="top:722px">  }</div>
<div class="code" style="top:737px"></div>
<div class="code" style="top:752px">  <span class="k">public</span> <span class="k">final</span> String a(String paramString1, String paramString2, String paramString3, String paramString4)</div>
<div class="code" style="top:767px">  {</div>
<div class="code" style="top:782px">    paramString1 = <span class="s">&quot;method=changePwdIFS&amp;newPwd=&quot;</span> + paramString2 + <span class="s">&quot;&amp;userId=&quot;</span> + paramString1 + <span class="s">&quot;&amp;oldPwd=&quot;</span> + paramString3 + <span class="s">&quot;&amp;idNumber=&quot;</span> + paramString4;</div>
<div class="code" style="top:797px">    Log.e(<span class="s">&quot;zhmzhm&quot;</span>, paramString1);</div>
<div class="code" style="top:812px">    <span class="k">for</span> (;;)</div>
<div class="code" style="top:827px">    {</div>
<div class="code" style="top:842px">      <span class="k">try</span></div>
<div class="code" style="top:857px">      {</div>
<div class="code" style="top:872px">        paramString2 = <span class="u">com.neusoft.edu.v6.ydszxy.hdjiaoda.appcenter.c.b.a</span>.<span class="u">a</span>(paramString1);</div>
<div class="code" style="top:887px">        paramString1 = paramString2;</div>
<div class="code" style="top:902px">        paramString2.printStackTrace();</div>
<div class="code" style="top:917px">      }</div>
</div></div>
<svg class="a" style="left:443px;top:605px" width="9" height="9"><use href="#gfold"/></svg>
<svg class="a" style="left:443px;top:635px" width="9" height="9"><use href="#gfold"/></svg>
<svg class="a" style="left:443px;top:170px" width="9" height="9"><use href="#gfold"/></svg>
<svg class="a" style="left:443px;top:770px" width="9" height="9"><use href="#gfold"/></svg>
<svg class="a" style="left:443px;top:320px" width="9" height="9"><use href="#gfold"/></svg>
<svg class="a" style="left:443px;top:350px" width="9" height="9"><use href="#gfold"/></svg>
<svg class="a" style="left:443px;top:830px" width="9" height="9"><use href="#gfold"/></svg>
<svg class="a" style="left:443px;top:860px" width="9" height="9"><use href="#gfold"/></svg>
<svg class="a" style="left:443px;top:425px" width="9" height="9"><use href="#gfold"/></svg>
<svg class="a" style="left:443px;top:455px" width="9" height="9"><use href="#gfold"/></svg>
<svg class="a" style="left:443px;top:530px" width="9" height="9"><use href="#gfold"/></svg>
<div class="a" style="left:1344px;top:135px;width:16px;height:801px;background:#f0f0f0"></div>
<div class="a" style="left:1344px;top:152px;width:15px;height:449px;background:#cdcdcd"></div>
<svg class="a" style="left:1347px;top:140px" width="9" height="9" viewBox="0 0 9 9"><path d="M1 6.6 L4.5 3 L8 6.6" fill="none" stroke="#5a5a5a" stroke-width="2.1"/></svg>
<svg class="a" style="left:1347px;top:906px" width="9" height="9" viewBox="0 0 9 9"><path d="M1 2.6 L4.5 6.2 L8 2.6" fill="none" stroke="#5a5a5a" stroke-width="2.1"/></svg>
<div class="a" style="left:441px;top:920px;width:903px;height:16px;background:#f0f0f0"></div>
<div class="a" style="left:471px;top:920px;width:387px;height:15px;background:#cdcdcd"></div>
<svg class="a" style="left:458px;top:923px" width="9" height="9" viewBox="0 0 9 9"><path d="M6.4 1 L2.8 4.5 L6.4 8" fill="none" stroke="#5a5a5a" stroke-width="2.1"/></svg>
<svg class="a" style="left:1330px;top:923px" width="9" height="9" viewBox="0 0 9 9"><path d="M2.6 1 L6.2 4.5 L2.6 8" fill="none" stroke="#5a5a5a" stroke-width="2.1"/></svg>
<svg class="a" style="left:8px;top:52px" width="114" height="22" viewBox="8 52 114 22">
<defs>
<linearGradient id="ty" x1="0" y1="0" x2="0" y2="1"><stop offset="0" stop-color="#fff4c8"/><stop offset="1" stop-color="#f6cc6a"/></linearGradient>
<linearGradient id="tb" x1="0" y1="0" x2="0" y2="1"><stop offset="0" stop-color="#bfe6ff"/><stop offset="1" stop-color="#86b8ec"/></linearGradient>
<radialGradient id="sp" cx="0.4" cy="0.3" r="0.7"><stop offset="0" stop-color="#a89ae0"/><stop offset="1" stop-color="#5a4ca8"/></radialGradient>
<radialGradient id="sg" cx="0.4" cy="0.3" r="0.7"><stop offset="0" stop-color="#7ad080"/><stop offset="1" stop-color="#1f7a30"/></radialGradient>
</defs>
<rect x="14.5" y="57.5" width="5" height="2.2" rx="1" fill="#fff8e0" stroke="#e0b070"/>
<rect x="12.5" y="59.5" width="11.5" height="7.5" fill="url(#ty)"/>
<path d="M11 59.6 H26" stroke="#8a7a9a" stroke-width="1.3"/>
<path d="M12.4 60 V67.8" stroke="#1f3fb0" stroke-width="1.3"/>
<path d="M15.5 63.6 H26.8 L22.8 68.4 H12.6 Z" fill="url(#tb)" stroke="#1f3fb0" stroke-width="1.3" stroke-linejoin="round"/>
<path d="M37.6 69 V60.6 Q37.6 59.6 38.6 59.6 H41 L42 60.6 H45 V64" fill="#fbe8b0" stroke="#c07a28" stroke-width="1.1"/>
<path d="M41.6 64.6 H52.6 L48 69.6 H38 Z" fill="url(#ty)" stroke="#c07a28" stroke-width="1.1" stroke-linejoin="round"/>
<circle cx="44.3" cy="59.6" r="3.3" fill="url(#sp)"/>
<circle cx="49.6" cy="61.3" r="3.5" fill="url(#sg)"/>
<path d="M62.8 62.2 L70.2 55 L74.2 59 L66.8 66.2 Z" fill="#fde7a8" stroke="#f0a030" stroke-width="1"/>
<path d="M70.5 55.3 L73.9 58.7 L74.2 55.2 Z" fill="#b0a89a"/>
<circle cx="68.8" cy="58.2" r="0.7" fill="#2a5aa8"/><circle cx="69.8" cy="57.3" r="0.7" fill="#2a5aa8"/>
<path d="M59.6 65.4 L62.8 62.2 L66.8 66.2 L63.6 69.4 Z" fill="#b4aebe" stroke="#8a7050" stroke-width="0.9"/>
<path d="M57 70.5 L59.6 65.4 L63.6 69.4 L58.5 71.5 Z" fill="#fffad0" stroke="#f5c040" stroke-width="0.8"/>
<path d="M84.2 63 L90.3 57.4 V60.4 H97.4 V65.6 H90.3 V68.6 Z" fill="url(#ty)" stroke="#c8841c" stroke-width="1.1" stroke-linejoin="round"/>
<path d="M117.6 63 L111.6 57.4 V60.4 H104.4 V65.6 H111.6 V68.6 Z" fill="#a4a4a4" stroke="#9c9c9c" stroke-width="1.1" stroke-linejoin="round"/>
<rect x="31" y="55" width="1" height="16" fill="#8a8a8a"/>
<rect x="77" y="55" width="1" height="16" fill="#8a8a8a"/>
</svg>
</body></html>
